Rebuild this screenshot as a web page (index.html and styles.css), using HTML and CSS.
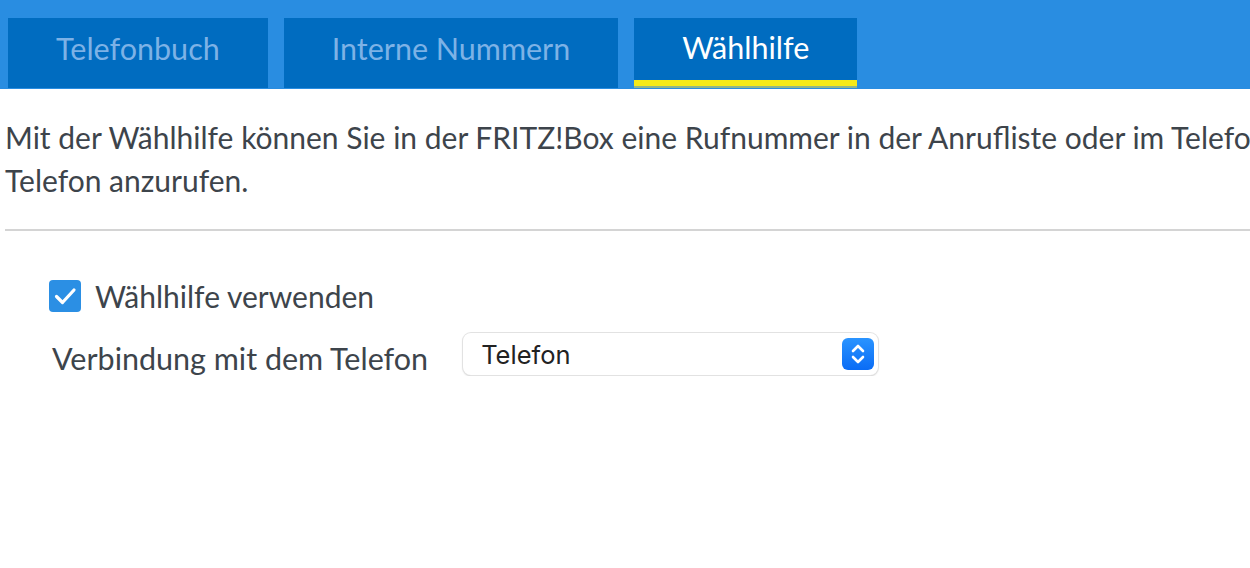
FILE: index.html
```html
<!DOCTYPE html>
<html lang="de">
<head>
<meta charset="utf-8">
<title>Wählhilfe</title>
<link rel="stylesheet" href="styles.css">
</head>
<body>
<div class="page">
  <nav class="tabs">
    <a class="tab">Telefonbuch</a>
    <a class="tab">Interne Nummern</a>
    <a class="tab active">Wählhilfe</a>
  </nav>
  <main class="content">
    <p class="intro">Mit der Wählhilfe können Sie in der FRITZ!Box eine Rufnummer in der Anrufliste oder im Telefonbuch anklicken, um diese Nummer mit Ihrem<br>Telefon anzurufen.</p>
    <hr class="divider">
    <div class="form">
      <label class="check-row">
        <span class="checkbox">
          <svg viewBox="0 0 32 32" width="32" height="32"><path d="M7.5 16.5 L13.5 22.5 L25 10" fill="none" stroke="#fff" stroke-width="3.2" stroke-linecap="round" stroke-linejoin="round"/></svg>
        </span>
        <span class="check-label">Wählhilfe verwenden</span>
      </label>
      <div class="select-row">
        <span class="select-label">Verbindung mit dem Telefon</span>
        <div class="select">
          <span class="select-value">Telefon</span>
          <span class="stepper">
            <svg viewBox="0 0 32 32" width="32" height="32"><path d="M11 13 L16 8 L21 13" fill="none" stroke="#fff" stroke-width="2.6" stroke-linecap="round" stroke-linejoin="round"/><path d="M11 19 L16 24 L21 19" fill="none" stroke="#fff" stroke-width="2.6" stroke-linecap="round" stroke-linejoin="round"/></svg>
          </span>
        </div>
      </div>
    </div>
  </main>
</div>
</body>
</html>
```
FILE: styles.css
```css
html, body {
  margin: 0;
  padding: 0;
  background: #fff;
  overflow: hidden;
}
.page {
  width: 1250px;
  font-family: "Lato", "Open Sans", sans-serif;
  color: #3d444b;
}
.tabs {
  display: flex;
  gap: 16px;
  background: #298de1;
  padding: 18px 0 1px 8px;
  height: 70px;
}
.tab {
  display: flex;
  align-items: center;
  justify-content: center;
  padding: 0 48px 10px;
  background: #006cc0;
  color: #7db2e6;
  font-size: 30.5px;
  box-sizing: border-box;
  height: 70px;
}
.tab.active {
  color: #fff;
  height: 68px;
  border-bottom: 6px solid #f6ea18;
  box-shadow: 0 2px 0 #8fb58a;
  padding-bottom: 4px;
}
.content {
  padding-left: 5px;
}
.intro {
  width: 1700px;
  margin: 27px 0 0 0;
  font-size: 30px;
  line-height: 43px;
  white-space: nowrap;
}
.divider {
  border: 0;
  height: 2px;
  background: #d4d4d4;
  margin: 27px 0 0 0;
}
.form {
  padding: 47px 0 0 44px;
  display: flex;
  flex-direction: column;
  gap: 18px;
}
.check-row {
  display: flex;
  align-items: center;
  gap: 14px;
  font-size: 30px;
}
.checkbox {
  width: 32px;
  height: 32px;
  border-radius: 4px;
  background: #2b8fe4;
  display: flex;
}
.select-row {
  display: flex;
  align-items: center;
  gap: 35px;
  padding-left: 3px;
}
.select-label {
  font-size: 30.5px;
  padding-top: 8px;
}
.select {
  width: 415px;
  height: 42px;
  box-sizing: border-box;
  border-radius: 8px;
  background: #fff;
  box-shadow: 0 0 0 1px #e2e2e2, 0 1px 2px rgba(0,0,0,0.25);
  display: flex;
  align-items: center;
  justify-content: space-between;
  padding: 0 4px 0 18px;
}
.select-value {
  font-family: "Inter", "Liberation Sans", sans-serif;
  font-size: 25.5px;
  color: #222;
}
.stepper {
  width: 32px;
  height: 32px;
  border-radius: 6px;
  background: linear-gradient(#2a94ff, #0a6cf5);
  display: flex;
}
```
